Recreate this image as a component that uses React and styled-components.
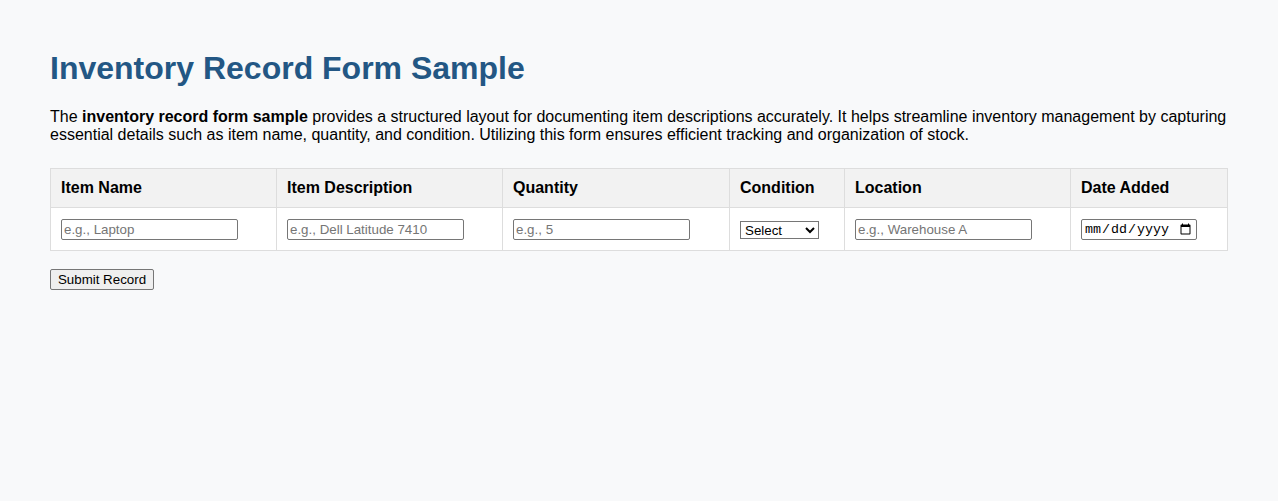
import React from "react";
import styled, { createGlobalStyle } from "styled-components";

const GlobalStyle = createGlobalStyle`
    body {
        margin: 0;
        padding: 29px 50px;
        background-color: #f8f9fa;
        font-family: "Liberation Sans", Arial, sans-serif;
        color: #000;
    }
`;

const columns = [
    { title: "Item Name", width: 226 },
    { title: "Item Description", width: 226 },
    { title: "Quantity", width: 227 },
    { title: "Condition", width: 115 },
    { title: "Location", width: 226 },
    { title: "Date Added", width: 157 },
];

function App() {
    return (
        <>
            <GlobalStyle />
            <Title>Inventory Record Form Sample</Title>
            <Intro>
                The <strong>inventory record form sample</strong> provides a
                structured layout for documenting item descriptions accurately.
                It helps streamline inventory management by capturing essential
                details such as item name, quantity, and condition. Utilizing
                this form ensures efficient tracking and organization of stock.
            </Intro>
            <form onSubmit={(e) => e.preventDefault()}>
                <Table>
                    <thead>
                        <tr>
                            {columns.map((col) => (
                                <Th key={col.title} $width={col.width}>
                                    {col.title}
                                </Th>
                            ))}
                        </tr>
                    </thead>
                    <tbody>
                        <tr>
                            <Td>
                                <TextInput type="text" placeholder="e.g., Laptop" />
                            </Td>
                            <Td>
                                <TextInput
                                    type="text"
                                    placeholder="e.g., Dell Latitude 7410"
                                />
                            </Td>
                            <Td>
                                <TextInput type="number" placeholder="e.g., 5" />
                            </Td>
                            <Td>
                                <Select defaultValue="">
                                    <option value="">Select</option>
                                    <option value="new">New</option>
                                    <option value="used">Used</option>
                                    <option value="damaged">Damaged</option>
                                </Select>
                            </Td>
                            <Td>
                                <TextInput
                                    type="text"
                                    placeholder="e.g., Warehouse A"
                                />
                            </Td>
                            <Td>
                                <DateInput type="date" />
                            </Td>
                        </tr>
                    </tbody>
                </Table>
                <SubmitButton type="submit">Submit Record</SubmitButton>
            </form>
        </>
    );
}

const Title = styled.h1`
    margin: 21px 0;
    font-size: 32px;
    font-weight: bold;
    color: #235784;
`;

const Intro = styled.p`
    margin: 0 0 24px;
    font-size: 16px;
    line-height: 18px;
`;

const Table = styled.table`
    width: 100%;
    border-collapse: collapse;
    table-layout: fixed;
`;

const Th = styled.th`
    box-sizing: border-box;
    width: ${(props) => props.$width}px;
    padding: 10px;
    border: 1px solid #dddddd;
    background-color: #f2f2f2;
    text-align: left;
    font-size: 16px;
    line-height: 18px;
    font-weight: bold;
`;

const Td = styled.td`
    padding: 11px 10px 10px;
    border: 1px solid #dddddd;
    background-color: #ffffff;
    line-height: 18px;
`;

const TextInput = styled.input`
    box-sizing: border-box;
    width: 177px;
    height: 21px;
    padding: 1px 2px;
    border: 1px solid #767676;
    border-radius: 2px;
    font-family: "Liberation Sans", Arial, sans-serif;
    font-size: 13.33px;
    background: #fff;
    vertical-align: middle;
    &::placeholder {
        color: #757575;
    }
    &::-webkit-outer-spin-button,
    &::-webkit-inner-spin-button {
        -webkit-appearance: none;
        margin: 0;
    }
`;

const Select = styled.select`
    box-sizing: border-box;
    width: 79px;
    height: 18px;
    font-family: "Liberation Sans", Arial, sans-serif;
    font-size: 13.33px;
    border: 1px solid #767676;
    border-radius: 0;
    background: #fff;
    color: #000;
    vertical-align: middle;
`;

const DateInput = styled.input`
    box-sizing: border-box;
    width: 116px;
    height: 21px;
    padding: 1px 2px;
    border: 1px solid #767676;
    border-radius: 2px;
    font-family: "Liberation Mono", monospace;
    font-size: 13.33px;
    background: #fff;
    vertical-align: middle;
`;

const SubmitButton = styled.button`
    box-sizing: border-box;
    margin-top: 18px;
    width: 104px;
    height: 21px;
    padding: 1px 6px;
    border: 1px solid #767676;
    border-radius: 2px;
    background-color: #efefef;
    font-family: "Liberation Sans", Arial, sans-serif;
    font-size: 13.33px;
    color: #000;
`;

export default App;
